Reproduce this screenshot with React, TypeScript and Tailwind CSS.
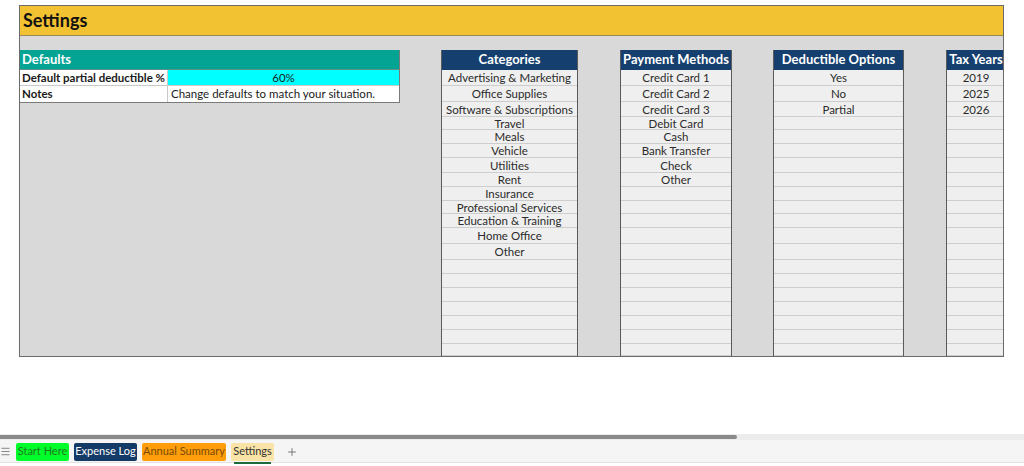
import { Menu, Plus } from "lucide-react";

const ROWS = [16, 16, 15, 13, 14, 14, 15, 14, 14, 13, 14, 16, 16, 14, 14, 14, 14, 14, 14, 12];

const CATEGORIES = [
  "Advertising & Marketing",
  "Office Supplies",
  "Software & Subscriptions",
  "Travel",
  "Meals",
  "Vehicle",
  "Utilities",
  "Rent",
  "Insurance",
  "Professional Services",
  "Education & Training",
  "Home Office",
  "Other",
];

const PAYMENTS = ["Credit Card 1", "Credit Card 2", "Credit Card 3", "Debit Card", "Cash", "Bank Transfer", "Check", "Other"];
const DEDUCTIBLE = ["Yes", "No", "Partial"];
const YEARS = ["2019", "2025", "2026"];

function ListTable({ title, items, className = "" }: { title: string; items: string[]; className?: string }) {
  return (
    <div className={`flex flex-col shrink-0 border-x border-[#5b5b5b] ${className}`}>
      <div className="h-[20px] flex items-center justify-center bg-[#153f6e] text-white font-bold text-[13px] whitespace-nowrap">
        {title}
      </div>
      {ROWS.map((h, i) => (
        <div
          key={i}
          style={{ height: h }}
          className="flex items-center justify-center bg-[#efefef] border-b border-[#cdcdcd] text-[11.5px] text-[#2b2b2b] whitespace-nowrap leading-none pt-[1px]"
        >
          {items[i] ?? ""}
        </div>
      ))}
    </div>
  );
}

const TABS = [
  { label: "Start Here", cls: "bg-[#00ff2a] text-[#1f7a1f] w-[53px]" },
  { label: "Expense Log", cls: "bg-[#143a66] text-white w-[63px]" },
  { label: "Annual Summary", cls: "bg-[#ff9d0a] text-[#7a4a00] w-[84px]" },
];

export default function App() {
  return (
    <div className="w-[1024px] h-[466px] bg-white relative overflow-hidden font-['Lato','Open_Sans',sans-serif]">
      <div className="pt-[5px] pl-[19px]">
        <div className="w-[985px] h-[352px] border border-[#6b6b6b] bg-[#d9d9d9] flex flex-col overflow-hidden">
          <div className="h-[30px] shrink-0 bg-[#f2c232] border-b border-[#9a8a5a] flex items-center pl-[3px]">
            <span className="text-[18px] font-bold text-[#111]">Settings</span>
          </div>
          <div className="flex items-start pt-[14px] flex-1 min-h-0">
            {/* Defaults */}
            <div className="w-[380px] shrink-0 border-r border-b border-[#7a7a7a]">
              <div className="h-[20px] bg-[#04a495] border-b border-[#5f8f8a] flex items-center pl-[2px] text-white font-bold text-[13px]">
                Defaults
              </div>
              <div className="flex h-[16px] border-b border-[#c9c9c9] text-[11.5px] leading-none">
                <div className="w-[148px] bg-white flex items-center pl-[2px] font-bold text-[#1a1a1a] border-r border-[#c9c9c9] whitespace-nowrap overflow-hidden">
                  Default partial deductible %
                </div>
                <div className="flex-1 bg-[#00ffff] flex items-center justify-center text-[#1a1a1a]">60%</div>
              </div>
              <div className="flex h-[16px] text-[11.5px] leading-none">
                <div className="w-[148px] bg-white flex items-center pl-[2px] font-bold text-[#1a1a1a] border-r border-[#c9c9c9]">
                  Notes
                </div>
                <div className="flex-1 bg-white flex items-center pl-[3px] text-[#1a1a1a] whitespace-nowrap">
                  Change defaults to match your situation.
                </div>
              </div>
            </div>
            <ListTable title="Categories" items={CATEGORIES} className="ml-[41px] w-[137px]" />
            <ListTable title="Payment Methods" items={PAYMENTS} className="ml-[42px] w-[112px]" />
            <ListTable title="Deductible Options" items={DEDUCTIBLE} className="ml-[41px] w-[131px]" />
            <ListTable title="Tax Years" items={YEARS} className="ml-[42px] w-[60px]" />
          </div>
        </div>
      </div>

      {/* bottom bar */}
      <div className="absolute left-0 right-0 top-[434px]">
        <div className="h-[6px] bg-[#ececec] flex items-center">
          <div className="w-[737px] h-[4px] bg-[#8a8a8a] rounded-r-sm" />
        </div>
        <div className="h-[23px] bg-[#f5f5f5] border-b border-[#e2e2e2] flex items-center gap-[5px] pt-[1px]">
          <Menu size={11} className="text-[#555]" strokeWidth={1.5} />
          {TABS.map((t) => (
            <div key={t.label} className={`h-[18px] flex items-center justify-center text-[11px] rounded-[2px] ${t.cls}`}>
              {t.label}
            </div>
          ))}
          <div className="relative h-[18px] w-[43px] bg-[#f9e3a6] rounded-[2px] flex items-center justify-center text-[11px] text-[#333]">
            Settings
            <div className="absolute left-[3px] right-[3px] -bottom-[3px] h-[2px] bg-[#1d6b3c]" />
          </div>
          <Plus size={12} className="text-[#555] ml-[7px]" strokeWidth={1.5} />
        </div>
      </div>
    </div>
  );
}
